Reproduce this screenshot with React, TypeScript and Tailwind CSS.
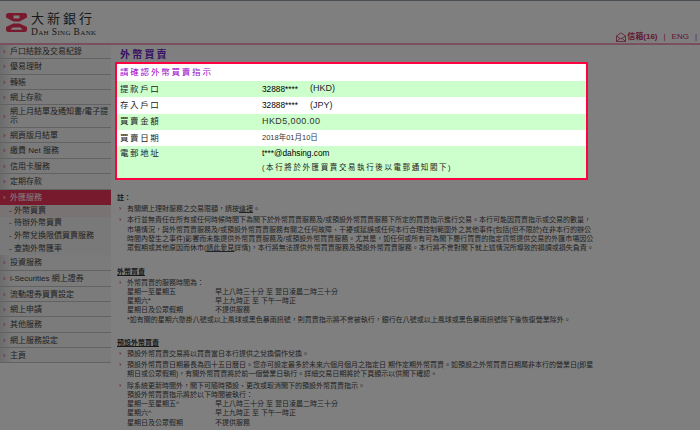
import type { ReactNode } from 'react';

const font = { fontFamily: '"Liberation Sans", "Noto Sans CJK TC", sans-serif' };

type NavItem = { label: string; h: string; active?: boolean; sub?: boolean; current?: boolean };

const nav: NavItem[] = [
  { label: '戶口結餘及交易紀錄', h: 'h-[14px]' },
  { label: '優易理財', h: 'h-[16px]' },
  { label: '轉賬', h: 'h-[15px]' },
  { label: '網上存款', h: 'h-[15px]' },
  { label: '網上月結單及通知書/電子提示', h: 'h-[23px]' },
  { label: '網頁版月結單', h: 'h-[15px]' },
  { label: '繳費 Net 服務', h: 'h-[16px]' },
  { label: '信用卡服務', h: 'h-[15px]' },
  { label: '定期存款', h: 'h-[16px]' },
  { label: '外匯服務', h: 'h-[15px]', active: true },
  { label: '外幣買賣', h: 'h-[12px]', sub: true, current: true },
  { label: '待辦外幣買賣', h: 'h-[12px]', sub: true },
  { label: '外幣兌換限價買賣服務', h: 'h-[13px]', sub: true },
  { label: '查詢外幣匯率', h: 'h-[13px]', sub: true },
  { label: '投資服務', h: 'h-[16px]' },
  { label: 'i-Securities 網上證券', h: 'h-[16px]' },
  { label: '流動證券買賣設定', h: 'h-[15px]' },
  { label: '網上申請', h: 'h-[15px]' },
  { label: '其他服務', h: 'h-[16px]' },
  { label: '網上服務設定', h: 'h-[15px]' },
  { label: '主頁', h: 'h-[15px]' },
];

function Sidebar() {
  return (
    <div className="w-[111px] shrink-0 bg-[#f6f6f6] bg-gradient-to-r from-[#d8d8d8] to-[#f6f6f6] to-[12px] self-start">
      {nav.map((n) =>
        n.sub ? (
          <div
            key={n.label}
            className={`${n.h} flex items-center pl-[9px] text-[8px] leading-none text-[#444] whitespace-nowrap ${n.current ? 'bg-[#f5e6e8]' : 'bg-[#f3f3f3]'}`}
          >
            - {n.label}
          </div>
        ) : (
          <div
            key={n.label}
            className={`${n.h} flex items-center pl-[3px] text-[8px] leading-[9px] border-b ${
              n.active ? 'bg-[#f0345a] text-white border-[#f0345a]' : 'text-[#444] border-[#c4c4c4]'
            }`}
          >
            <span className={`w-[7px] shrink-0 text-[8px] ${n.active ? 'text-white' : 'text-[#d04060]'}`}>›</span>
            <span>{n.label}</span>
          </div>
        ),
      )}
    </div>
  );
}

function Row({ label, green, children }: { label: string; green?: boolean; children: ReactNode }) {
  return (
    <div className={`h-[16.3px] flex items-center pl-[3px] ${green ? 'bg-[#ccffcc]' : 'bg-white'}`}>
      <span className="w-[142px] text-[8.5px] tracking-[1.6px] text-[#222]">{label}</span>
      {children}
    </div>
  );
}

function Account({ no, ccy }: { no: string; ccy: string }) {
  return (
    <>
      <span className="w-[48px] text-[8.3px] text-black whitespace-nowrap">{no}</span>
      <span className="text-[9px] text-[#223]">{ccy}</span>
    </>
  );
}

function ConfirmBox() {
  return (
    <div className="relative z-10 w-[473px] h-[118px] border-2 border-[#ff0040] bg-white">
      <div className="h-[17px] flex items-center pl-[3px] text-[8.5px] tracking-[1.8px] text-[#9900cc]">請確認外幣買賣指示</div>
      <Row label="提款戶口" green>
        <Account no="32888****" ccy="(HKD)" />
      </Row>
      <Row label="存入戶口">
        <Account no="32888****" ccy="(JPY)" />
      </Row>
      <Row label="買賣金額" green>
        <span className="text-[9px] tracking-[0.4px] text-[#333]">HKD5,000.00</span>
      </Row>
      <Row label="買賣日期">
        <span className="text-[7.5px] text-[#333]">2018年01月10日</span>
      </Row>
      <div className="h-[32px] bg-[#ccffcc] pl-[3px] flex">
        <span className="w-[142px] text-[8.5px] leading-[14px] tracking-[1.6px] text-[#222]">電郵地址</span>
        <div>
          <div className="text-[8.3px] leading-[14px] text-black">t***@dahsing.com</div>
          <div className="text-[7.5px] leading-[15px] tracking-[1.6px] text-[#222] whitespace-nowrap">(本行將於外匯買賣交易執行後以電郵通知閣下)</div>
        </div>
      </div>
    </div>
  );
}

function Bullet({ children }: { children: ReactNode }) {
  return (
    <div className="flex pl-[2px] text-[7px] leading-[9.3px] text-[#444] mb-[1.8px]">
      <span className="w-[8px] shrink-0 text-[#d04060]">›</span>
      <div className="whitespace-nowrap">{children}</div>
    </div>
  );
}

function Hours({ rows }: { rows: [string, string][] }) {
  return (
    <>
      {rows.map(([a, b]) => (
        <div key={a} className="flex">
          <span className="w-[88px] shrink-0">{a}</span>
          <span>{b}</span>
        </div>
      ))}
    </>
  );
}

function Heading({ children }: { children: ReactNode }) {
  return <div className="text-[7px] leading-[9px] font-bold underline text-[#333] mt-[14px] mb-[2px]">{children}</div>;
}

function Notes() {
  return (
    <div className="pl-[2px] pt-[13px]">
      <div className="text-[7px] leading-[9px] font-bold text-[#333] mb-[2.3px]">註：</div>
      <Bullet>有關網上理財服務之交易限額，請按<span className="underline">這裡</span>。</Bullet>
      <Bullet>
        本行並無責任在所有或任何時候時間下為閣下於外幣買賣服務及/或預設外幣買賣服務下所定的買賣指示進行交易。本行可能因買賣指示或交易的數量，<br />
        市場情況，與外幣買賣服務及/或預設外幣買賣服務有關之任何故障、干擾或延誤或任何本行合理控制範圍外之其他事件(包括(但不限於)在非本行的辦公<br />
        時間內發生之事件)影響而未能提供外幣買賣服務及/或預設外幣買賣服務。尤其是，如任何或所有可為閣下履行買賣的指定貨幣提供交易的外匯市場因公<br />
        眾假期或其他原因而休市(<span className="underline">請此參見</span>詳情)，本行將無法提供外幣買賣服務及預設外幣買賣服務。本行將不會對閣下就上述情況所導致的損調或損失負責。
      </Bullet>
      <Heading>外幣買賣</Heading>
      <Bullet>
        外幣買賣的服務時間為：
        <Hours rows={[['星期一至星期五', '早上八時三十分 至 翌日凌晨二時三十分'], ['星期六*', '早上九時正 至 下午一時正'], ['星期日及公眾假期', '不提供服務']]} />
        *如有關的星期六懸掛八號或以上風球或黑色暴雨訊號，則買賣指示將不會被執行，銀行在八號或以上風球或黑色暴雨訊號除下後恢復營業除外。
      </Bullet>
      <Heading>預設外幣買賣</Heading>
      <Bullet>預設外幣買賣交易將以買賣當日本行提供之兌換價作兌換。</Bullet>
      <Bullet>
        預設外幣買賣日期最長為四十五日曆日。您亦可設定最多於未來六個月個月之指定日 期作定期外幣買賣。如預設之外幣買賣日期屬非本行的營業日(即星<br />
        期日或公眾假期)，有關外幣買賣將於前一個營業日執行。詳細交易日期將於下頁顯示以供閣下確認。
      </Bullet>
      <Bullet>
        除系統更新時間外，閣下可隨時預設、更改或取消閣下的預設外幣買賣指示。
        <div>預設外幣買賣指示將於以下時間被執行：</div>
        <Hours rows={[['星期一至星期五^', '早上八時三十分 至 翌日凌晨二時三十分'], ['星期六^', '早上九時正 至 下午一時正'], ['星期日及公眾假期', '不提供服務']]} />
      </Bullet>
    </div>
  );
}

export default function App() {
  return (
    <div className="relative w-[700px] h-[430px] overflow-hidden bg-white" style={font}>
      <div className="h-[45px] border-t border-[#909aa4] border-b-2 border-b-[#f4a0bc] flex items-start justify-between">
        <div className="pt-[12px] pl-[6px] flex items-start gap-[4px]">
          <svg width="21" height="19" viewBox="0 0 21 19">
            <path d="M0 2.5Q0 0 2.5 0H18.5Q21 0 21 2.5V4.5L13.5 8.5H7.5L0 4.5Z" fill="#f0345a" />
            <path d="M0 16.5Q0 19 2.5 19H18.5Q21 19 21 16.5V14L13.5 10.5H7.5L0 14Z" fill="#f0345a" />
            <path d="M7.5 2.5H13.5V5.5H7.5Z" fill="#fff" />
            <path d="M6.5 14.5H14.5L16.5 16.8H4.5Z" fill="#fff" />
          </svg>
          <div className="-mt-[1px]">
            <div className="text-[13px] leading-[14px] tracking-[3px] text-[#333]" style={{ fontFamily: '"Liberation Serif", "Noto Sans CJK TC", serif' }}>大新銀行</div>
            <div className="text-[9.5px] leading-[10px] mt-[1px] tracking-[0.35px] text-[#333] whitespace-nowrap" style={{ fontFamily: '"Liberation Serif", serif', fontVariant: 'small-caps' }}>Dah Sing Bank</div>
          </div>
        </div>
        <div className="pt-[30px] flex items-center text-[8px] text-[#c83058] whitespace-nowrap">
          <svg width="10" height="10" viewBox="0 0 10 10" fill="none" stroke="#c83058" strokeWidth="0.8" className="mr-[1px]">
            <path d="M0.5 4L5 0.8 9.5 4V9.5H0.5Z M0.5 4L5 7 9.5 4 M0.5 9.5L4 6.3 M9.5 9.5L6 6.3" />
          </svg>
          <span className="font-bold">信箱(16)</span>
          <span className="mx-[6px]">|</span>
          <span>ENG</span>
          <span className="ml-[6px]">|</span>
          <span className="w-[3px]" />
        </div>
      </div>
      <div className="flex">
        <Sidebar />
        <div className="pl-[4px] flex-1 min-w-0">
          <div className="h-[17px] pl-[5px] pt-[4px] text-[10px] leading-[12px] font-bold tracking-[2.2px] text-[#6a24c8]">外幣買賣</div>
          <ConfirmBox />
          <Notes />
        </div>
      </div>
      <div className="absolute inset-0 bg-black/50" />
    </div>
  );
}
